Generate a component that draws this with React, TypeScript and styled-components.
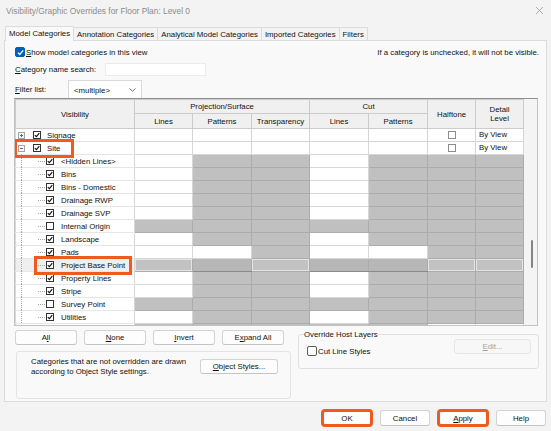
import React from "react";
import styled, { createGlobalStyle } from "styled-components";

const RED = "#f05a1e";

const GlobalStyle = createGlobalStyle`
  html, body {
    margin: 0;
    padding: 0;
    background: #f3f3f3;
  }
  body {
    font-family: "Liberation Sans", Arial, sans-serif;
    font-size: 7.8px;
    color: #111111;
  }
`;

const Window = styled.div`
  width: 551px;
  height: 431px;
  overflow: hidden;
  display: flex;
  flex-direction: column;
  background: #f3f3f3;
`;

const TitleBar = styled.div`
  height: 20px;
  padding: 1px 7px 0 6px;
  display: flex;
  align-items: center;
  justify-content: space-between;
  color: #8c8c8c;
  font-size: 8.35px;
  box-sizing: border-box;
`;

const TabStrip = styled.div`
  margin-top: 6px;
  padding-left: 5px;
  height: 14px;
  display: flex;
  align-items: flex-end;
`;

const Tab = styled.div<{ $active?: boolean }>`
  height: ${(p) => (p.$active ? 15 : 13)}px;
  line-height: ${(p) => (p.$active ? 14 : 13)}px;
  padding: 0 3px;
  margin-right: -1px;
  margin-bottom: ${(p) => (p.$active ? -1 : 0)}px;
  border: 1px solid #dcdcdc;
  border-bottom: none;
  background: ${(p) => (p.$active ? "#f9f9f9" : "#f3f3f3")};
  position: relative;
  z-index: ${(p) => (p.$active ? 1 : 0)};
  box-sizing: border-box;
  white-space: nowrap;
`;

const Panel = styled.div`
  margin: 0 4px;
  height: 362px;
  box-sizing: border-box;
  background: #f9f9f9;
  border: 1px solid #dcdcdc;
  padding: 5px 7px 0 10px;
  display: flex;
  flex-direction: column;
`;

const TopRow = styled.div`
  height: 12px;
  display: flex;
  align-items: center;
  justify-content: space-between;
`;

const WinCheck = styled.span<{ $on?: boolean }>`
  width: 10px;
  height: 10px;
  box-sizing: border-box;
  border-radius: 2px;
  background: ${(p) => (p.$on ? "#005fb8" : "#ffffff")};
  border: 1px solid ${(p) => (p.$on ? "#005fb8" : "#5c5c5c")};
  display: inline-flex;
  align-items: center;
  justify-content: center;
  margin-right: 1px;
  flex: none;
`;

const CheckLine = styled.label`
  display: flex;
  align-items: center;
`;

const FieldRow = styled.div<{ $h: number; $gap: number }>`
  margin-top: ${(p) => p.$gap}px;
  height: ${(p) => p.$h}px;
  display: flex;
  align-items: center;
`;

const FieldLabel = styled.span<{ $w: number }>`
  width: ${(p) => p.$w}px;
  flex: none;
`;

const SearchBox = styled.div`
  width: 101px;
  height: 13px;
  box-sizing: border-box;
  background: #ffffff;
  border: 1px solid #ececec;
`;

const SelectBox = styled.div`
  width: 74px;
  height: 19px;
  box-sizing: border-box;
  background: #ffffff;
  border: 1px solid #d9d9d9;
  border-bottom: none;
  display: flex;
  align-items: center;
  justify-content: space-between;
  padding: 0 5px 0 5px;
`;

const TableFrame = styled.div`
  margin: -1px 0 0 -1px;
  width: 524px;
  height: 228px;
  box-sizing: border-box;
  border: 1px solid #c2c2c2;
  border-top-color: #8f8f8f;
  display: flex;
  overflow: hidden;
  background: #f4f4f4;
`;

const GridTable = styled.table`
  width: 508px;
  table-layout: fixed;
  border-collapse: collapse;
  align-self: flex-start;
  background: #ffffff;
  font-size: 7.8px;
`;

const HeadCell = styled.th<{ $h: number }>`
  font-weight: normal;
  background: #f0f0f0;
  border: 1px solid #cbcbcb;
  padding: 0;
  height: ${(p) => p.$h}px;
  line-height: 9px;
  text-align: center;
  vertical-align: middle;
`;

type Tone = "w" | "g" | "sl" | "sd";

const toneBg: Record<Tone, string> = {
  w: "#ffffff",
  g: "#c0c0c0",
  sl: "#c2c2c2",
  sd: "#b7b7b7",
};

const DataCell = styled.td<{ $tone: Tone }>`
  padding: 0;
  height: 12px;
  border: 1px solid ${(p) => (p.$tone === "w" ? "#d6d6d6" : "#acacac")};
  border-bottom-color: ${(p) =>
    p.$tone === "sd" ? "#8a8a8a" : p.$tone === "w" ? "#d6d6d6" : "#acacac"};
  background: ${(p) => toneBg[p.$tone]};
  box-shadow: ${(p) => (p.$tone === "sl" ? "inset 0 0 0 1px #e4e4e4" : "none")};
  text-align: center;
  line-height: 12px;
`;

const ViewCell = styled(DataCell)`
  text-align: left;
  padding-left: 3px;
`;

const VisCell = styled.td<{ $sel?: boolean }>`
  padding: 0;
  height: 12px;
  border: 1px solid #d6d6d6;
  border-top-color: #e6e6e6;
  border-bottom-color: #e6e6e6;
  background: ${(p) => (p.$sel ? "#efefef" : "#ffffff")};
`;

const VisInner = styled.div<{ $top?: boolean }>`
  height: 12px;
  display: flex;
  align-items: center;
  padding-left: ${(p) => (p.$top ? 2 : 0)}px;
  white-space: nowrap;
`;

const Item = styled.span<{ $mark?: boolean; $pad?: number }>`
  display: inline-flex;
  align-items: center;
  height: 11px;
  padding-right: ${(p) => p.$pad ?? 0}px;
  position: relative;
  z-index: ${(p) => (p.$mark ? 3 : 0)};
  outline: ${(p) => (p.$mark ? `3px solid ${RED}` : "none")};
  outline-offset: 1px;
`;

const TreeBox = styled.span<{ $gap: number }>`
  width: 8px;
  height: 8px;
  box-sizing: border-box;
  border: 1px solid #333333;
  background: #ffffff;
  display: inline-flex;
  align-items: center;
  justify-content: center;
  margin-left: ${(p) => p.$gap}px;
  flex: none;
`;

const TreeLabel = styled.span<{ $gap: number }>`
  margin-left: ${(p) => p.$gap}px;
`;

const HalfBox = styled.span`
  display: inline-block;
  width: 8px;
  height: 8px;
  box-sizing: border-box;
  border: 1px solid #8c8c8c;
  background: #ffffff;
  vertical-align: middle;
`;

const ScrollTrack = styled.div`
  width: 14px;
  flex: none;
  background: #f4f4f4;
  display: flex;
  justify-content: center;
`;

const ScrollThumb = styled.div`
  width: 2px;
  height: 28px;
  margin-top: 141px;
  margin-left: 2px;
  border-radius: 1px;
  background: #858585;
`;

const BottomArea = styled.div`
  margin-top: 4px;
  display: flex;
`;

const LeftCol = styled.div`
  width: 276px;
  display: flex;
  flex-direction: column;
`;

const ButtonRow = styled.div`
  display: flex;
  gap: 7px;
`;

const Button = styled.button<{ $w: number; $h?: number; $mark?: boolean; $off?: boolean }>`
  width: ${(p) => p.$w}px;
  height: ${(p) => p.$h ?? 15}px;
  padding: 0;
  box-sizing: border-box;
  background: ${(p) => (p.$off ? "#f7f7f7" : "#fdfdfd")};
  border: 1px solid ${(p) => (p.$off ? "#e6e6e6" : "#d3d3d3")};
  border-bottom-color: ${(p) => (p.$off ? "#e6e6e6" : "#c4c4c4")};
  border-radius: 3px;
  color: ${(p) => (p.$off ? "#a3a3a3" : "#111111")};
  font-family: inherit;
  font-size: 7.8px;
  display: flex;
  align-items: center;
  justify-content: center;
  flex: none;
  outline: ${(p) => (p.$mark ? `3px solid ${RED}` : "none")};
  outline-offset: -2px;
`;

const InfoBox = styled.div`
  margin: 6px 0 0 1px;
  width: 275px;
  height: 48px;
  box-sizing: border-box;
  border: 1px solid #e3e3e3;
  border-radius: 3px;
  display: flex;
  align-items: flex-start;
  padding: 5px 12px 0 14px;
`;

const InfoText = styled.div`
  width: 160px;
  line-height: 10px;
`;

const StylesButton = styled(Button)`
  margin: 2px 0 0 auto;
`;

const RightCol = styled.div`
  margin-left: 7px;
  flex: 1;
`;

const HostGroup = styled.fieldset`
  margin: 0;
  height: 39px;
  box-sizing: border-box;
  border: 1px solid #e0e0e0;
  border-radius: 3px;
  padding: 0 7px 0 7px;
  display: flex;
  align-items: flex-start;
  justify-content: space-between;
`;

const HostLegend = styled.legend`
  padding: 0;
  margin-left: -2px;
  line-height: 9px;
`;

const HostCheck = styled(CheckLine)`
  margin-top: 7px;
  margin-left: 1px;
`;

const EditButton = styled(Button)`
  margin-top: 0;
`;

const Footer = styled.div`
  display: flex;
  justify-content: flex-end;
  gap: 8px;
  padding: 8px 5px 0 0;
`;

const Check = ({ color = "#111", size = 6 }: { color?: string; size?: number }) => (
  <svg width={size} height={size} viewBox="0 0 6 6">
    <path d="M0.8 3.1 L2.4 4.7 L5.3 1.2" fill="none" stroke={color} strokeWidth="1.1" />
  </svg>
);

const Expander = ({ open }: { open: boolean }) => (
  <svg width="7" height="7" viewBox="0 0 7 7" style={{ flex: "none" }}>
    <rect x="0.5" y="0.5" width="6" height="6" fill="#f7f7f7" stroke="#a4a4a4" />
    <line x1="2" y1="3.5" x2="5" y2="3.5" stroke="#5b6b86" />
    {!open && <line x1="3.5" y1="2" x2="3.5" y2="5" stroke="#5b6b86" />}
  </svg>
);

const Guide = () => (
  <svg width="22" height="13" viewBox="0 0 22 13" style={{ flex: "none", marginTop: -1 }}>
    <line x1="5.5" y1="0" x2="5.5" y2="13" stroke="#a8a8a8" strokeDasharray="1 1" />
  </svg>
);

const Connector = () => (
  <svg width="8" height="11" viewBox="0 0 8 11" style={{ flex: "none" }}>
    <line x1="0" y1="5.5" x2="7" y2="5.5" stroke="#a8a8a8" strokeDasharray="1 1" />
  </svg>
);

type Row = {
  name: string;
  top?: boolean;
  open?: boolean;
  checked: boolean;
  cells: string;
  sel?: boolean;
  mark?: boolean;
};

const rows: Row[] = [
  { name: "Signage", top: true, checked: true, cells: "wwwww" },
  { name: "Site", top: true, open: true, checked: true, cells: "wwwww", mark: true },
  { name: "<Hidden Lines>", checked: true, cells: "wggwggg" },
  { name: "Bins", checked: true, cells: "wggwggg" },
  { name: "Bins - Domestic", checked: true, cells: "wggwggg" },
  { name: "Drainage RWP", checked: true, cells: "wggwggg" },
  { name: "Drainage SVP", checked: true, cells: "wggwggg" },
  { name: "Internal Origin", checked: false, cells: "ggggggg" },
  { name: "Landscape", checked: true, cells: "wggwggg" },
  { name: "Pads", checked: true, cells: "wwgwwgg" },
  { name: "Project Base Point", checked: true, cells: "ggggggg", sel: true, mark: true },
  { name: "Property Lines", checked: true, cells: "wggwggg" },
  { name: "Stripe", checked: true, cells: "wggwggg" },
  { name: "Survey Point", checked: false, cells: "ggggggg" },
  { name: "Utilities", checked: true, cells: "wggwggg" },
  { name: "Specialty Equipment", top: true, checked: true, cells: "ggggg" },
];

const selTones: Tone[] = ["sl", "sd", "sl", "sd", "sd", "sl", "sl"];

const CategoryRow = ({ row }: { row: Row }) => {
  const tones: Tone[] = row.cells
    .split("")
    .map((c, i) => (row.sel ? selTones[i] : c === "g" ? "g" : "w"));
  return (
    <tr>
      <VisCell $sel={row.sel}>
        {row.top ? (
          <VisInner $top>
            <Item $mark={row.mark} $pad={row.mark ? 10 : 0}>
              <Expander open={!!row.open} />
              <TreeBox $gap={8}>{row.checked && <Check />}</TreeBox>
              <TreeLabel $gap={6}>{row.name}</TreeLabel>
            </Item>
          </VisInner>
        ) : (
          <VisInner>
            <Guide />
            <Item $mark={row.mark} $pad={row.mark ? 3 : 0}>
              <Connector />
              <TreeBox $gap={0}>{row.checked && <Check />}</TreeBox>
              <TreeLabel $gap={7}>{row.name}</TreeLabel>
            </Item>
          </VisInner>
        )}
      </VisCell>
      {tones.map((t, i) => (
        <DataCell key={i} $tone={t} />
      ))}
      {row.top && (
        <>
          <DataCell $tone="w">
            <HalfBox />
          </DataCell>
          <ViewCell $tone="w">By View</ViewCell>
        </>
      )}
    </tr>
  );
};

export default function App() {
  return (
    <>
      <GlobalStyle />
      <Window>
        <TitleBar>
          <span>Visibility/Graphic Overrides for Floor Plan: Level 0</span>
          <svg width="9" height="9" viewBox="0 0 9 9">
            <path d="M1 1 L8 8 M8 1 L1 8" stroke="#9a9a9a" strokeWidth="0.8" />
          </svg>
        </TitleBar>

        <TabStrip>
          <Tab $active>Model Categories</Tab>
          <Tab>Annotation Categories</Tab>
          <Tab>Analytical Model Categories</Tab>
          <Tab>Imported Categories</Tab>
          <Tab>Filters</Tab>
        </TabStrip>

        <Panel>
          <TopRow>
            <CheckLine>
              <WinCheck $on>
                <Check color="#ffffff" size={7} />
              </WinCheck>
              <span>
                <u>S</u>how model categories in this view
              </span>
            </CheckLine>
            <span>If a category is unchecked, it will not be visible.</span>
          </TopRow>

          <FieldRow $h={13} $gap={5}>
            <FieldLabel $w={90}>
              <u>C</u>ategory name search:
            </FieldLabel>
            <SearchBox />
          </FieldRow>

          <FieldRow $h={19} $gap={4}>
            <FieldLabel $w={53}>
              <u>F</u>ilter list:
            </FieldLabel>
            <SelectBox>
              <span>&lt;multiple&gt;</span>
              <svg width="7" height="4" viewBox="0 0 7 4">
                <path d="M0.5 0.5 L3.5 3.3 L6.5 0.5" fill="none" stroke="#555" strokeWidth="0.8" />
              </svg>
            </SelectBox>
          </FieldRow>

          <TableFrame>
            <GridTable>
              <colgroup>
                <col style={{ width: 119 }} />
                <col style={{ width: 58 }} />
                <col style={{ width: 59 }} />
                <col style={{ width: 58 }} />
                <col style={{ width: 59 }} />
                <col style={{ width: 59 }} />
                <col style={{ width: 48 }} />
                <col style={{ width: 48 }} />
              </colgroup>
              <thead>
                <tr>
                  <HeadCell $h={13} rowSpan={2}>
                    Visibility
                  </HeadCell>
                  <HeadCell $h={13} colSpan={3}>
                    Projection/Surface
                  </HeadCell>
                  <HeadCell $h={13} colSpan={2}>
                    Cut
                  </HeadCell>
                  <HeadCell $h={13} rowSpan={2}>
                    Halftone
                  </HeadCell>
                  <HeadCell $h={13} rowSpan={2}>
                    Detail
                    <br />
                    Level
                  </HeadCell>
                </tr>
                <tr>
                  <HeadCell $h={14}>Lines</HeadCell>
                  <HeadCell $h={14}>Patterns</HeadCell>
                  <HeadCell $h={14}>Transparency</HeadCell>
                  <HeadCell $h={14}>Lines</HeadCell>
                  <HeadCell $h={14}>Patterns</HeadCell>
                </tr>
              </thead>
              <tbody>
                {rows.map((r) => (
                  <CategoryRow key={r.name} row={r} />
                ))}
              </tbody>
            </GridTable>
            <ScrollTrack>
              <ScrollThumb />
            </ScrollTrack>
          </TableFrame>

          <BottomArea>
            <LeftCol>
              <ButtonRow>
                <Button $w={62}>
                  A<u>l</u>l
                </Button>
                <Button $w={62}>
                  <u>N</u>one
                </Button>
                <Button $w={62}>
                  <u>I</u>nvert
                </Button>
                <Button $w={62}>
                  E<u>x</u>pand All
                </Button>
              </ButtonRow>
              <InfoBox>
                <InfoText>
                  Categories that are not overridden are drawn according to Object Style settings.
                </InfoText>
                <StylesButton $w={78}>
                  <u>O</u>bject Styles...
                </StylesButton>
              </InfoBox>
            </LeftCol>

            <RightCol>
              <HostGroup>
                <HostLegend>Override Host Layers</HostLegend>
                <HostCheck>
                  <WinCheck />
                  <span>Cut Line Styles</span>
                </HostCheck>
                <EditButton $w={77} $off>
                  <u>E</u>dit...
                </EditButton>
              </HostGroup>
            </RightCol>
          </BottomArea>
        </Panel>

        <Footer>
          <Button $w={50} $h={16} $mark>
            OK
          </Button>
          <Button $w={50} $h={16}>
            Cancel
          </Button>
          <Button $w={50} $h={16} $mark>
            <u>A</u>pply
          </Button>
          <Button $w={50} $h={16}>
            Help
          </Button>
        </Footer>
      </Window>
    </>
  );
}
